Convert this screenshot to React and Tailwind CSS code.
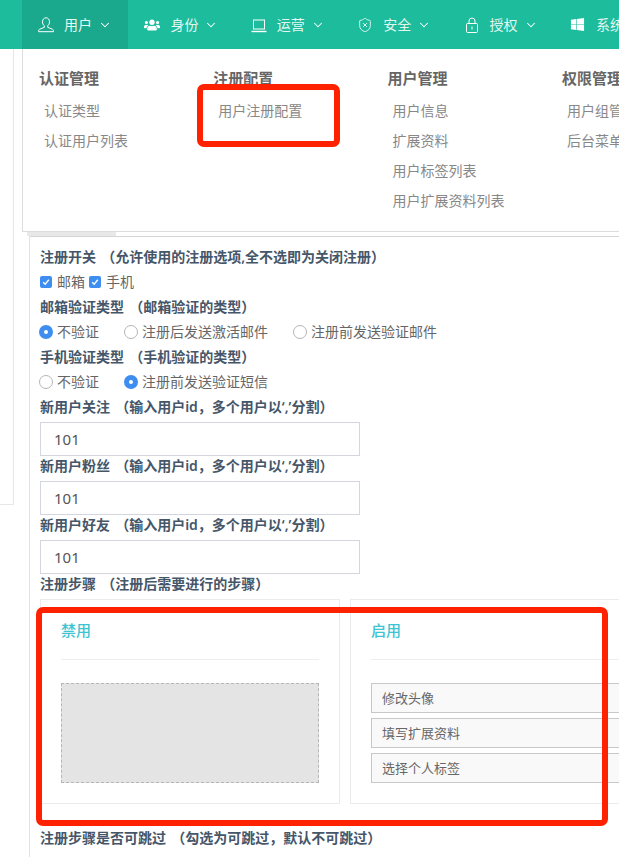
import { ChevronDown, ShieldX } from "lucide-react";
import { FaUsers, FaWindows } from "react-icons/fa";

function UserIcon() {
  return (
    <svg width="16" height="16" viewBox="0 0 16 16" fill="none" stroke="currentColor" strokeWidth="1">
      <path d="M8 .8C5.8.8 4.5 2.6 4.5 4.9c0 1.8.8 3 1.8 3.9v1.5l-4.8 2c-.6.3-.9.7-.9 1.2v1.2h14.8v-1.2c0-.5-.3-.9-.9-1.2l-4.8-2V8.8c1-.9 1.8-2.1 1.8-3.9C11.5 2.6 10.2.8 8 .8z" />
    </svg>
  );
}

function LaptopIcon() {
  return (
    <svg width="16" height="16" viewBox="0 0 16 16" fill="none" stroke="currentColor" strokeWidth="1">
      <rect x="2.5" y="3" width="11" height="9" />
      <path d="M.5 14.5h15" strokeWidth="1.4" />
    </svg>
  );
}

function LockIcon() {
  return (
    <svg width="16" height="16" viewBox="0 0 16 16" fill="none" stroke="currentColor" strokeWidth="1">
      <rect x="2.5" y="6.5" width="11" height="9" rx="1" />
      <path d="M5 6.5V4a3 3 0 0 1 6 0v2.5M8 9.5v3" />
    </svg>
  );
}

const nav = [
  { label: "用户", icon: <UserIcon />, active: true },
  { label: "身份", icon: <FaUsers size={16} /> },
  { label: "运营", icon: <LaptopIcon /> },
  { label: "安全", icon: <ShieldX size={16} strokeWidth={1.2} /> },
  { label: "授权", icon: <LockIcon /> },
  { label: "系统", icon: <FaWindows size={15} /> },
];

const groups = [
  { title: "认证管理", items: ["认证类型", "认证用户列表"] },
  { title: "注册配置", items: ["用户注册配置"] },
  { title: "用户管理", items: ["用户信息", "扩展资料", "用户标签列表", "用户扩展资料列表"] },
  { title: "权限管理", items: ["用户组管理", "后台菜单管理"] },
];

function Label({ name, hint }) {
  return (
    <div className="mb-[5px] h-5 whitespace-nowrap text-sm leading-5 font-semibold text-[#465669]">
      {name} <span className="ml-[1.5px]">（{hint}）</span>
    </div>
  );
}

function Check({ label }) {
  return (
    <span className="flex items-center gap-[5px]">
      <span className="grid h-3 w-3 place-items-center rounded-[2px] bg-[#3d8ef0]">
        <svg width="8" height="8" viewBox="0 0 8 8" fill="none" stroke="#fff" strokeWidth="1.4">
          <path d="M1.2 4.2 3.2 6.2 6.8 1.8" />
        </svg>
      </span>
      {label}
    </span>
  );
}

function Radio({ label, on, width }) {
  return (
    <span className={`flex items-center gap-1 ${width}`}>
      {on ? (
        <span className="grid h-[14px] w-[14px] place-items-center rounded-full bg-[#3d8ef0]">
          <span className="h-1 w-1 rounded-full bg-white" />
        </span>
      ) : (
        <span className="h-[14px] w-[14px] rounded-full border border-[#b5b5b5] bg-white" />
      )}
      {label}
    </span>
  );
}

function IdField({ name }) {
  return (
    <>
      <Label name={name} hint="输入用户id，多个用户以‘,’分割" />
      <div className="flex h-[34px] w-[320px] items-center border border-[#d3d6de] px-[13px] pt-px text-[15px] text-[#555]">
        101
      </div>
    </>
  );
}

function Card({ title, children }) {
  return (
    <div className="h-[205px] w-[300px] shrink-0 border border-[#e9ebee] bg-white px-5 pt-5">
      <div className="h-10 border-b border-[#eeeeee] text-[15px] leading-[21px] font-medium text-[#3cc4d2]">{title}</div>
      <div className="mt-[23px]">{children}</div>
    </div>
  );
}

export default function App() {
  return (
    <div className="relative h-[857px] w-[619px] overflow-hidden bg-white font-['Noto_Sans','Noto_Sans_CJK_SC',sans-serif]">
      <nav className="flex h-[49px] items-stretch bg-[#1dbc9c] text-sm text-[#e3f6f2]">
        <div className="flex w-[22px] shrink-0 items-center justify-end overflow-hidden pr-[19px]">
          <ChevronDown size={14} strokeWidth={1.8} className="shrink-0 text-white" />
        </div>
        {nav.map((n) => (
          <div
            key={n.label}
            className={`flex w-[106.4px] shrink-0 items-center pl-4 ${n.active ? "bg-[#1aa98c]" : ""}`}
          >
            <span className="grid w-4 place-items-center text-white">{n.icon}</span>
            <span className="ml-[10px] whitespace-nowrap">{n.label}</span>
            <ChevronDown size={14} strokeWidth={1.8} className="ml-[6px] shrink-0 text-white" />
          </div>
        ))}
      </nav>

      <div className="flex">
        <div className="h-[456px] w-[14px] shrink-0 border-r border-b border-[#e7e7e7]" />
        <div className="ml-[15px] min-h-[808px] flex-1 border-l border-[#dfe2e8] pt-[182px]">
          <div className="h-[6px] w-full border-b border-[#d5d5d5]">
            <div className="-ml-[3px] h-[5px] w-[89px] bg-[#e8e8e8]" />
          </div>
          <div className="pt-[10px] pl-[10px]">
            <Label name="注册开关" hint="允许使用的注册选项,全不选即为关闭注册" />
            <div className="mb-[5px] flex h-5 items-center gap-1 text-sm text-[#666]">
              <Check label="邮箱" />
              <Check label="手机" />
            </div>
            <Label name="邮箱验证类型" hint="邮箱验证的类型" />
            <div className="mb-[5px] -ml-px flex h-5 items-center text-sm text-[#666]">
              <Radio label="不验证" on width="w-[85px]" />
              <Radio label="注册后发送激活邮件" width="w-[169px]" />
              <Radio label="注册前发送验证邮件" />
            </div>
            <Label name="手机验证类型" hint="手机验证的类型" />
            <div className="mb-[5px] -ml-px flex h-5 items-center text-sm text-[#666]">
              <Radio label="不验证" width="w-[85px]" />
              <Radio label="注册前发送验证短信" on />
            </div>
            <IdField name="新用户关注" />
            <IdField name="新用户粉丝" />
            <IdField name="新用户好友" />
            <Label name="注册步骤" hint="注册后需要进行的步骤" />
            <div className="mb-6 flex gap-[10px]">
              <Card title="禁用">
                <div className="h-[100px] border border-dashed border-[#b5b5b5] bg-[#e4e4e4]" />
              </Card>
              <Card title="启用">
                <div className="flex flex-col gap-[5px]">
                  {["修改头像", "填写扩展资料", "选择个人标签"].map((s) => (
                    <div key={s} className="flex h-[30px] items-center border border-[#c8c8c8] bg-[#f9f9f9] px-[10px] pt-px text-[13px] text-[#666]">
                      {s}
                    </div>
                  ))}
                </div>
              </Card>
            </div>
            <Label name="注册步骤是否可跳过" hint="勾选为可跳过，默认不可跳过" />
          </div>
        </div>
      </div>

      {/* dropdown over the page */}
      <div className="absolute top-[49px] left-[22px] flex h-[183px] w-[700px] border border-t-0 border-[#dcdcdc] bg-white pt-[19px] pl-[16px]">
        {groups.map((g) => (
          <div key={g.title} className="w-[174.3px] shrink-0">
            <div className="h-5 text-[15px] leading-5 font-bold whitespace-nowrap text-[#666]">{g.title}</div>
            <div className="mt-2 flex flex-col pl-[5px]">
              {g.items.map((i) => (
                <div key={i} className="flex h-[30px] items-center text-sm whitespace-nowrap text-[#888]">
                  {i}
                </div>
              ))}
            </div>
          </div>
        ))}
      </div>

      {/* red annotation boxes */}
      <div className="absolute top-[84px] left-[197px] h-[63px] w-[143px] rounded-[7px] border-[6px] border-[#ff2200]" />
      <div className="absolute top-[607px] left-[36px] h-[219px] w-[572px] rounded-[7px] border-[6px] border-[#ff2200]" />
    </div>
  );
}
